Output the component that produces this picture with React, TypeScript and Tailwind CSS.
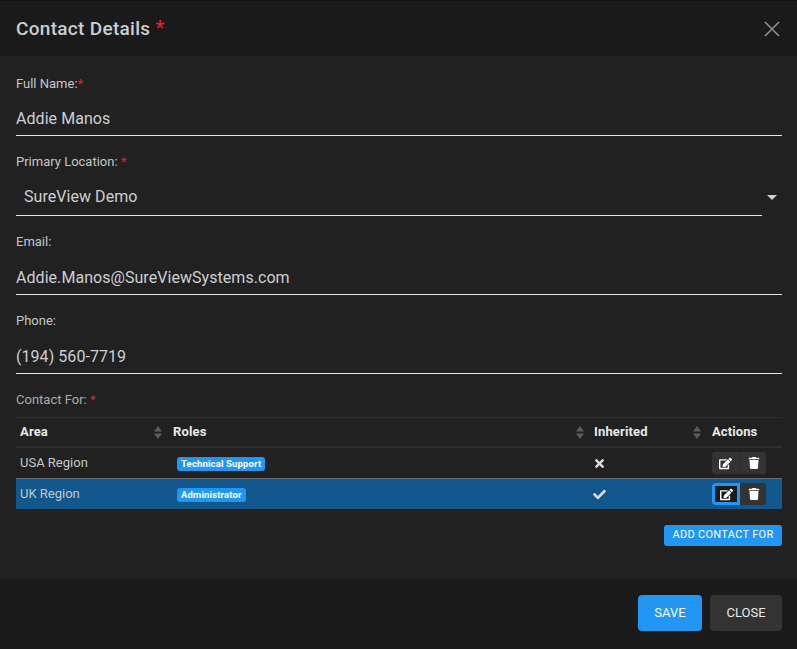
import React from 'react';
import { FaCheck, FaEdit, FaTimes, FaTrash } from 'react-icons/fa';

function Field({ label, value, star, className, gapClass }: { label: string; value: string; star?: boolean; className: string; gapClass: string }) {
  return (
    <div className={className}>
      <div className="h-[17px] text-[13px] leading-[17px] text-[#c4c7cb]">
        {label}
        {star && <span className="text-[#e0202c]">*</span>}
      </div>
      <div className={`flex h-[34px] items-center border-b border-[#e6e6e6] text-[16px] tracking-[0.05px] text-[#cdcfd2] ${gapClass}`}>
        {value}
      </div>
    </div>
  );
}

function SortHead({ label, className }: { label: string; className: string }) {
  return (
    <div className={`flex items-center justify-between pl-1 text-[13px] font-bold tracking-[0.15px] text-[#e8e8e8] ${className}`}>
      <span>{label}</span>
      <svg width="8" height="13" viewBox="0 0 8 13" fill="#5c5c5c">
        <path d="M4 0 8 5.5H0Z" />
        <path d="M0 7.5H8L4 13Z" />
      </svg>
    </div>
  );
}

function ActionButtons({ focused }: { focused?: boolean }) {
  return (
    <div className="flex h-[22px] w-[54px] overflow-hidden rounded-[3px] bg-[#333333]">
      <button className={`flex w-[28px] items-center justify-center text-[13px] text-white ${focused ? 'rounded-l-[3px] border-[3px] border-[#2196f3] bg-[#1a1a1a]' : 'border-r border-[#2c2c2c]'}`}>
        <FaEdit />
      </button>
      <button className="flex flex-1 items-center justify-center pl-[1px] text-[12px] text-white">
        <FaTrash />
      </button>
    </div>
  );
}

function Row({ area, role, inherited, selected }: { area: string; role: string; inherited: boolean; selected?: boolean }) {
  return (
    <div className={`grid h-[30px] grid-cols-[153px_421px_118px_74px] items-center text-[13px] text-[#c4c7cb] ${selected ? 'bg-[#12578b]' : ''}`}>
      <div className="pl-1">{area}</div>
      <div className="pl-2 pt-[2px]">
        <span className="block w-fit rounded-[3px] bg-[#2196f3] px-1 text-[9.5px] font-bold leading-[14px] tracking-[0.15px] text-white">{role}</span>
      </div>
      <div className="pl-[3px] text-[13px] text-[#dcdcdc]">{inherited ? <FaCheck /> : <FaTimes />}</div>
      <div className="pl-[4px]">
        <ActionButtons focused={selected} />
      </div>
    </div>
  );
}

export default function App() {
  return (
    <div className="flex h-[649px] w-[797px] flex-col overflow-hidden bg-[#212121] font-['Roboto',sans-serif]">
      <header className="flex h-[56px] shrink-0 items-center justify-between border-t border-[#121212] bg-[#1a1a1a] pl-4 pr-[17px]">
        <h1 className="text-[19px] font-medium leading-[28px] tracking-[0.3px] text-[#c9ced4]">
          Contact Details <span className="text-[20px] leading-none text-[#e0202c]">*</span>
        </h1>
        <svg width="16" height="16" viewBox="0 0 16 16" stroke="#8f8f8f" strokeWidth="1.6" fill="none">
          <path d="M1 1 15 15M15 1 1 15" />
        </svg>
      </header>

      <main className="flex-1 px-4 pt-[19px]">
        <div className="w-[766px]">
          <Field label="Full Name:" value="Addie Manos" star className="h-[78px]" gapClass="mt-[10px]" />
          <div className="h-[80px]">
            <div className="h-[17px] text-[13px] leading-[17px] text-[#c4c7cb]">
              Primary Location: <span className="text-[#e0202c]">*</span>
            </div>
            <div className="mt-[12px] flex h-[34px] items-center justify-between">
              <div className="flex h-[34px] w-[746px] items-center border-b border-[#e6e6e6] pb-[3px] pl-[8px] text-[16px] tracking-[0.05px] text-[#cdcfd2]">
                SureView Demo
              </div>
              <div className="mb-[4px] mr-[5px] h-0 w-0 border-x-[5px] border-t-[5px] border-x-transparent border-t-[#d0d0d0]" />
            </div>
          </div>
          <Field label="Email:" value="Addie.Manos@SureViewSystems.com" className="h-[79px]" gapClass="mt-[11px]" />
          <Field label="Phone:" value="(194) 560-7719" className="h-[79px]" gapClass="mt-[11px]" />

          <div className="h-[17px] text-[13px] leading-[17px] text-[#a9acaf]">
            Contact For: <span className="text-[#e0202c]">*</span>
          </div>
          <div className="mt-[9px] border-t border-[#2e2e2e]">
            <div className="grid h-[30px] grid-cols-[153px_421px_118px_74px] items-center border-b-2 border-[#2e2e2e]">
              <SortHead label="Area" className="pr-[7px]" />
              <SortHead label="Roles" className="pr-[6px]" />
              <SortHead label="Inherited" className="pr-[7px]" />
              <div className="pl-1 text-[13px] font-bold tracking-[0.1px] text-[#e8e8e8]">Actions</div>
            </div>
            <Row area="USA Region" role="Technical Support" inherited={false} />
            <div className="h-px bg-[#6d6d6d]" />
            <Row area="UK Region" role="Administrator" inherited selected />
          </div>
          <div className="mt-[16px] flex justify-end">
            <button className="h-[21px] w-[118px] rounded-[3px] bg-[#2196f3] text-[11px] tracking-[0.3px] text-white">ADD CONTACT FOR</button>
          </div>
        </div>
      </main>

      <footer className="flex h-[70px] shrink-0 items-start justify-end gap-2 bg-[#1a1a1a] pr-[15px] pt-[16px]">
        <button className="h-[36px] w-[64px] rounded-[4px] bg-[#2196f3] text-[13px] text-white">SAVE</button>
        <button className="h-[36px] w-[72px] rounded-[4px] bg-[#333333] text-[13px] text-[#e8e8e8]">CLOSE</button>
      </footer>
    </div>
  );
}
